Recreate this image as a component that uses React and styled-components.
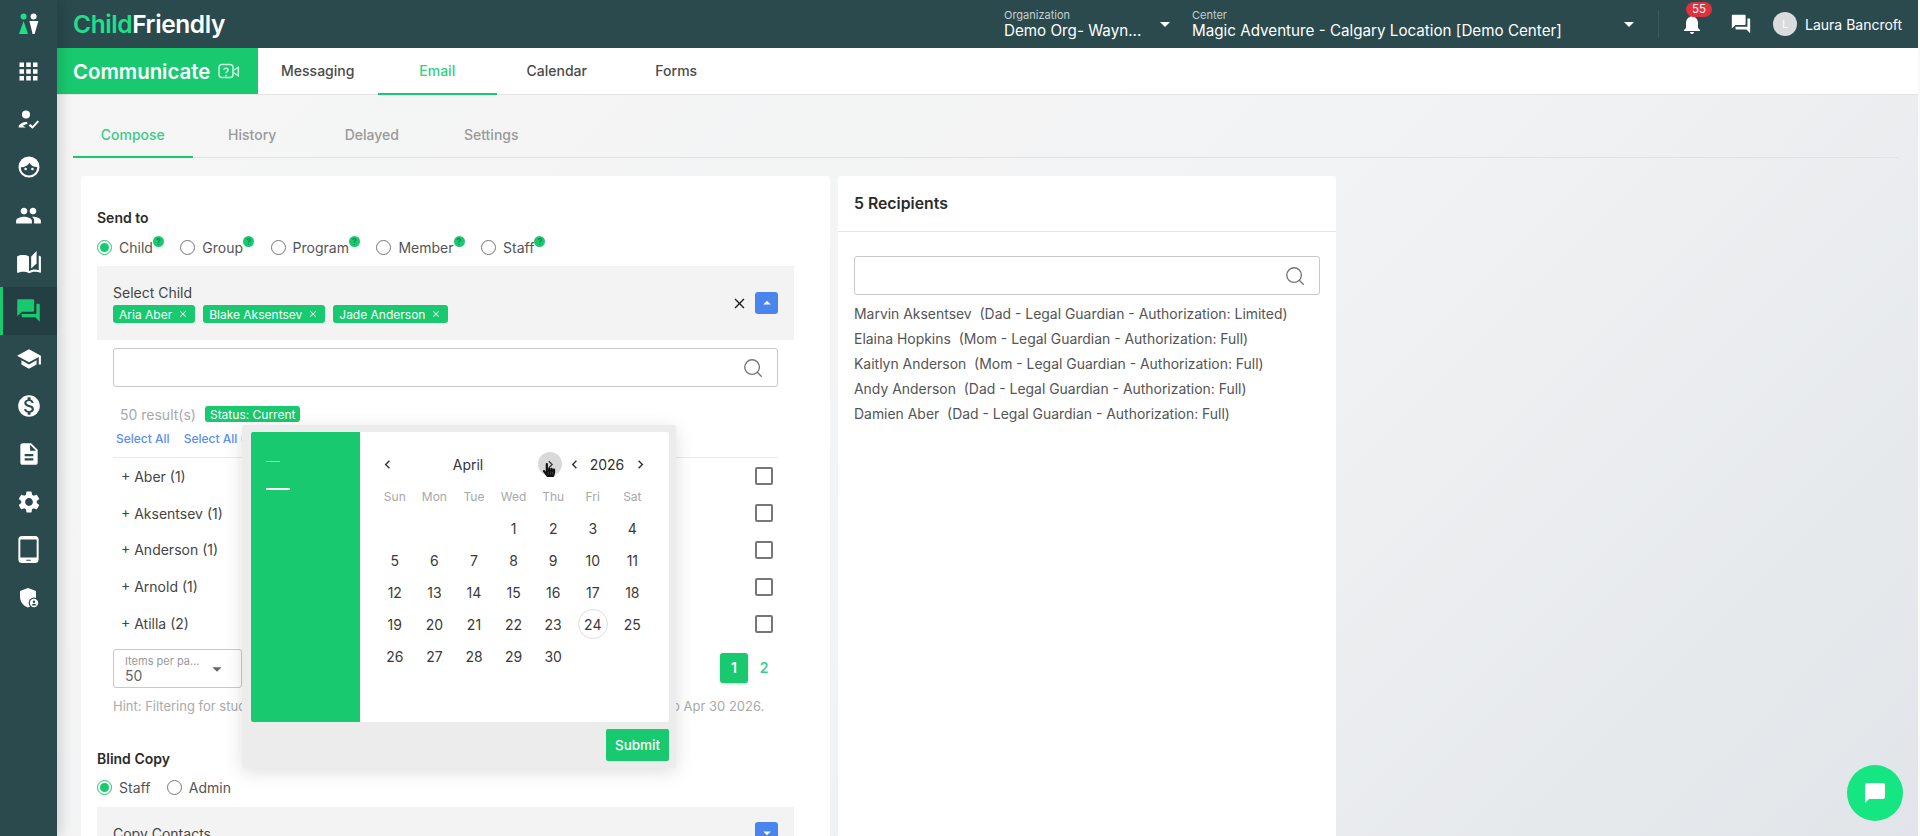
import styled, { createGlobalStyle } from 'styled-components';
import {
  MdApps,
  MdPeople,
  MdAutoStories,
  MdForum,
  MdSchool,
  MdMonetizationOn,
  MdDescription,
  MdSettings,
  MdTabletAndroid,
  MdNotifications,
  MdArrowDropDown,
  MdArrowDropUp,
  MdClose,
  MdChevronLeft,
  MdChevronRight,
  MdChatBubble,
} from 'react-icons/md';
import { FaHandPointer } from 'react-icons/fa';
import { Search } from 'lucide-react';

const GREEN = '#18c96f';
const BAR = '#2a4a4e';

const GlobalStyle = createGlobalStyle`
  html, body { margin: 0; padding: 0; }
  body {
    font-family: 'Inter', 'Liberation Sans', sans-serif;
    color: #333;
    background: #f4f4f4;
  }
  * { box-sizing: border-box; }
`;

const Shell = styled.div`
  position: relative;
  display: flex;
  width: 1920px;
  height: 836px;
  overflow: hidden;
  border-right: 2px solid #fafafa;
  background: linear-gradient(135deg, #f6f6f6 0%, #f2f3f4 55%, #e1e5e9 100%);
`;

const Sidebar = styled.nav`
  width: 57px;
  flex: none;
  display: flex;
  flex-direction: column;
  background: ${BAR};
  box-shadow: 4px 0 12px rgba(0, 0, 0, 0.14);
  z-index: 2;
`;

const LogoCell = styled.div`
  height: 48px;
  display: flex;
  align-items: center;
  justify-content: center;
`;

const NavItem = styled.div`
  height: 47.8px;
  display: flex;
  align-items: center;
  justify-content: center;
  color: ${(p) => (p.$active ? GREEN : '#fff')};
  background: ${(p) => (p.$active ? '#233f43' : 'transparent')};
  border-left: 3px solid ${(p) => (p.$active ? GREEN : 'transparent')};
  padding-right: 3px;
`;

const Main = styled.div`
  flex: 1;
  min-width: 0;
  display: flex;
  flex-direction: column;
`;

const TopBar = styled.header`
  height: 48px;
  flex: none;
  display: flex;
  align-items: center;
  padding-left: 16px;
  background: ${BAR};
  color: #fff;
`;

const Brand = styled.div`
  width: 931px;
  font-size: 24.5px;
  font-weight: 600;
  letter-spacing: -0.4px;
  color: #fff;
`;

const BrandAccent = styled.span`
  color: #1fe08a;
`;

const Picker = styled.div`
  width: ${(p) => p.$width}px;
  height: 100%;
  flex: none;
  display: flex;
  align-items: center;
  position: relative;
  padding-right: ${(p) => p.$pad}px;
`;

const PickerText = styled.div`
  flex: 1;
  min-width: 0;
  padding-top: 1px;
`;

const PickerLabel = styled.div`
  font-size: 11px;
  line-height: 12px;
  color: #c5d0d1;
`;

const PickerValue = styled.div`
  font-size: 15.2px;
  line-height: 19px;
  color: #fff;
  white-space: nowrap;
`;

const BarDivider = styled.div`
  width: 1px;
  height: 28px;
  background: #3b595d;
  margin-right: 20px;
`;

const BellWrap = styled.div`
  position: relative;
  width: 26px;
  height: 26px;
  margin-right: 25px;
  margin-top: 2px;
  display: flex;
  justify-content: center;
`;

const Badge = styled.span`
  position: absolute;
  top: -10px;
  left: 7px;
  min-width: 26px;
  height: 15px;
  padding: 0 3px;
  border-radius: 8px;
  background: #e0313d;
  color: #fff;
  font-size: 11.5px;
  line-height: 15px;
  text-align: center;
`;

const Avatar = styled.div`
  width: 24px;
  height: 24px;
  margin: 0 8px 0 21px;
  border-radius: 50%;
  background: #d9dcdc;
  color: #fff;
  font-size: 10px;
  line-height: 24px;
  text-align: center;
`;

const UserName = styled.span`
  font-size: 14px;
  white-space: nowrap;
`;

const ModuleBar = styled.div`
  height: 47px;
  flex: none;
  display: flex;
  background: #fff;
  border-bottom: 1px solid #e4e4e4;
`;

const ModuleTitle = styled.div`
  width: 201px;
  display: flex;
  align-items: center;
  gap: 8px;
  padding-left: 16px;
  background: ${GREEN};
  color: #fff;
  font-size: 20.4px;
  font-weight: 600;
`;

const ModuleTab = styled.div`
  width: 119.5px;
  display: flex;
  align-items: center;
  justify-content: center;
  font-size: 14px;
  font-weight: 500;
  color: ${(p) => (p.$active ? '#2fcf84' : '#4a4a4a')};
  border-bottom: 2px solid ${(p) => (p.$active ? GREEN : 'transparent')};
  margin-bottom: -1px;
`;

const SubTabs = styled.div`
  height: 63px;
  flex: none;
  display: flex;
  margin: 0 20px 0 16px;
  border-bottom: 1px solid #e2e2e2;
`;

const SubTab = styled.div`
  width: 119.5px;
  padding-top: 31px;
  text-align: center;
  font-size: 14px;
  font-weight: 500;
  color: ${(p) => (p.$active ? '#3dcb88' : '#9a9a9a')};
  border-bottom: 2px solid ${(p) => (p.$active ? GREEN : 'transparent')};
  margin-bottom: -1px;
`;

const Cards = styled.div`
  flex: 1;
  min-height: 0;
  display: flex;
  gap: 8px;
  padding: 18px 0 0 24px;
  overflow: hidden;
`;

const Card = styled.section`
  position: relative;
  width: ${(p) => p.$width}px;
  flex: none;
  background: #fff;
  border-radius: 3px 3px 0 0;
`;

const ComposeCard = styled(Card)`
  padding: 33px 36px 0 16px;
`;

const SectionTitle = styled.div`
  font-size: 14px;
  line-height: 18px;
  font-weight: 600;
  color: #2b2b2b;
`;

const RadioRow = styled.div`
  display: flex;
  height: 22px;
  margin-top: 9px;
  align-items: center;
  gap: 16.5px;
`;

const RadioLabel = styled.label`
  display: flex;
  align-items: center;
  gap: 7px;
  font-size: 14px;
  color: #555;
`;

const RadioMark = styled.span`
  position: relative;
  width: 15px;
  height: 15px;
  border-radius: 50%;
  border: 1px solid ${(p) => (p.$on ? GREEN : '#777')};

  &::after {
    content: '';
    display: ${(p) => (p.$on ? 'block' : 'none')};
    position: absolute;
    inset: 2px;
    border-radius: 50%;
    background: ${GREEN};
  }
`;

const HelpLabel = styled.span`
  position: relative;
  padding-right: ${(p) => (p.$help ? 11 : 0)}px;
`;

const HelpDot = styled.span`
  position: absolute;
  right: 0;
  top: -3px;
  width: 11px;
  height: 11px;
  border-radius: 50%;
  background: ${GREEN};
  color: #0f8a55;
  font-size: 9px;
  font-weight: 600;
  line-height: 11px;
  text-align: center;
`;

const SelectBox = styled.div`
  position: relative;
  display: flex;
  flex-direction: column;
  margin-top: 8px;
  height: ${(p) => (p.$tall ? 74 : 60)}px;
  padding: 18px 16px 0;
  background: #f3f3f3;
`;

const SelectLabel = styled.div`
  font-size: 14px;
  line-height: 18px;
  color: #444;
`;

const ChipRow = styled.div`
  display: flex;
  gap: 8px;
  margin-top: 3px;
`;

const Chip = styled.span`
  display: inline-flex;
  align-items: center;
  height: 18px;
  padding: 0 7px 0 6px;
  gap: 6px;
  border-radius: 3px;
  background: ${GREEN};
  color: #fff;
  font-size: 12px;
  white-space: nowrap;
`;

const SelectActions = styled.div`
  position: absolute;
  right: 16px;
  top: ${(p) => p.$top}px;
  display: flex;
  align-items: center;
  gap: 7px;
  color: #222;
`;

const ToggleButton = styled.span`
  width: 23px;
  height: 22px;
  display: flex;
  align-items: center;
  justify-content: center;
  border-radius: 3px;
  background: #4a85ee;
  color: #fff;
`;

const SearchField = styled.div`
  display: flex;
  align-items: center;
  justify-content: flex-end;
  height: 39px;
  margin: ${(p) => p.$margin};
  padding-right: 13px;
  border: 1px solid #c9c9c9;
  border-radius: 3px;
  background: #fff;
  color: #777;
`;

const ResultLine = styled.div`
  display: flex;
  align-items: center;
  gap: 9px;
  height: 18px;
  margin: 18px 0 0 23px;
  font-size: 14px;
  color: #a9a9a9;
`;

const StatusChip = styled(Chip)`
  height: 16px;
  padding: 0 5px;
`;

const SelectLinks = styled.div`
  display: flex;
  gap: 14px;
  height: 16px;
  margin: 8px 0 0 19px;
  font-size: 12px;
  line-height: 16px;
  font-weight: 500;
  color: #5c8df0;
`;

const FamilyList = styled.div`
  margin: 10px 16px 0;
  border-top: 1px solid #e9e9e9;
`;

const FamilyRow = styled.div`
  display: flex;
  align-items: center;
  justify-content: space-between;
  height: 36.8px;
  padding: 0 5px 0 8px;
  font-size: 14px;
  color: #444;
`;

const CheckBox = styled.span`
  width: 18px;
  height: 18px;
  border: 2px solid #777;
  border-radius: 2px;
`;

const PagerRow = styled.div`
  display: flex;
  align-items: center;
  margin: 7px 16px 0;
  height: 39px;
`;

const PerPage = styled.div`
  position: relative;
  width: 129px;
  height: 39px;
  padding: 5px 0 0 11px;
  border: 1px solid #c9c9c9;
  border-radius: 3px;
  color: #666;
`;

const PerPageLabel = styled.div`
  font-size: 11px;
  line-height: 12px;
  color: #999;
`;

const PerPageValue = styled.div`
  font-size: 14px;
  line-height: 17px;
`;

const CaretSlot = styled.span`
  position: absolute;
  right: 13px;
  top: 8px;
`;

const PageButton = styled.span`
  width: ${(p) => (p.$on ? 28 : 16)}px;
  height: 30px;
  margin-left: ${(p) => (p.$on ? 'auto' : '8px')};
  margin-right: ${(p) => (p.$on ? 0 : '6px')};
  border-radius: 3px;
  background: ${(p) => (p.$on ? GREEN : 'transparent')};
  box-shadow: ${(p) => (p.$on ? '0 1px 3px rgba(0,0,0,.2)' : 'none')};
  color: ${(p) => (p.$on ? '#fff' : '#35cf86')};
  font-size: 14px;
  font-weight: 600;
  line-height: 30px;
  text-align: center;
`;

const Hint = styled.div`
  margin: 9px 0 0 16px;
  font-size: 13px;
  line-height: 18px;
  color: #aaa;
  white-space: nowrap;
`;

const BlindTitle = styled(SectionTitle)`
  margin-top: 35px;
`;

const RecipientHead = styled.div`
  height: 56px;
  display: flex;
  align-items: center;
  padding-left: 16px;
  border-bottom: 1px solid #e6e6e6;
  font-size: 15.8px;
  font-weight: 600;
  color: #2b2b2b;
`;

const RecipientList = styled.div`
  padding: 0 16px;
`;

const Recipient = styled.div`
  height: 25px;
  line-height: 25px;
  font-size: 13.95px;
  color: #555;
  white-space: pre;
`;

const PopupShell = styled.div`
  position: absolute;
  left: 161px;
  top: 249px;
  width: 434px;
  height: 343px;
  padding: 7px 7px 0 9px;
  background: #ececec;
  box-shadow: 0 4px 18px rgba(0, 0, 0, 0.13);
  border-radius: 2px;
`;

const PopupBody = styled.div`
  display: flex;
  height: 290px;
  background: #fff;
  border-radius: 2px;
  overflow: hidden;
`;

const RangePane = styled.div`
  width: 109px;
  flex: none;
  padding: 29px 0 0 15px;
  background: ${GREEN};
`;

const RangeDash = styled.div`
  width: ${(p) => p.$w}px;
  height: ${(p) => p.$h}px;
  margin-bottom: ${(p) => p.$gap}px;
  background: ${(p) => p.$color};
`;

const CalendarPane = styled.div`
  flex: 1;
  padding: 20px 0 0 15px;
`;

const MonthHead = styled.div`
  display: flex;
  align-items: center;
  height: 24px;
  padding-left: 1px;
  color: #333;
  font-size: 14px;
`;

const NavChevron = styled.span`
  display: flex;
  align-items: center;
  justify-content: center;
  width: ${(p) => p.$w || 24}px;
  height: 24px;
  border-radius: 50%;
  background: ${(p) => (p.$hover ? '#d9d9d9' : 'transparent')};
`;

const MonthName = styled.span`
  width: ${(p) => p.$w}px;
  text-align: center;
`;

const WeekGrid = styled.div`
  display: grid;
  grid-template-columns: repeat(7, 39.6px);
  grid-auto-rows: 32px;
  width: 277px;
  margin-top: ${(p) => p.$top}px;
`;

const WeekDay = styled.span`
  display: flex;
  align-items: center;
  justify-content: center;
  font-size: 12px;
  color: #a8a8a8;
`;

const DayCell = styled.span`
  display: flex;
  align-items: center;
  justify-content: center;
  font-size: 14px;
  color: #3a3a3a;
`;

const TodayRing = styled.span`
  width: 30px;
  height: 30px;
  display: flex;
  align-items: center;
  justify-content: center;
  border: 1px solid #dedede;
  border-radius: 50%;
`;

const PopupFoot = styled.div`
  display: flex;
  justify-content: flex-end;
  margin-top: 7px;
`;

const SubmitButton = styled.button`
  width: 63px;
  height: 32px;
  border: none;
  border-radius: 2px;
  background: ${GREEN};
  color: #fff;
  font-family: inherit;
  font-size: 13.5px;
  font-weight: 500;
`;

const Pointer = styled.span`
  position: absolute;
  left: 300px;
  top: 38px;
  color: #111;
  display: flex;
`;

const ChatFab = styled.div`
  position: absolute;
  left: 1847px;
  top: 765px;
  width: 56px;
  height: 56px;
  display: flex;
  align-items: center;
  justify-content: center;
  border-radius: 50%;
  background: #16e681;
  color: #fff;
`;

const LogoMark = () => (
  <svg width="20" height="22" viewBox="0 0 20 22">
    <circle cx="4.6" cy="3.6" r="3" fill="#1fe08a" />
    <circle cx="14.6" cy="3.6" r="3" fill="#fff" />
    <path d="M4.6 8 L9 21 H0 Z" fill="#1fe08a" />
    <path d="M10.4 8 H19.4 L15.6 21 H13.6 Z" fill="#fff" />
  </svg>
);

const PersonCheck = () => (
  <svg width="24" height="24" viewBox="0 0 24 24" fill="#fff">
    <circle cx="9" cy="6.5" r="4" />
    <path d="M1.5 19.5c0-3.4 4.4-5.4 8.3-5.4l1 1.4-5 2.2 3 1.8z" />
    <path d="M11.5 17.5l2-1.6 2 2 5-5.4 1.6 1.3-6.6 7z" />
  </svg>
);

const FaceIcon = () => (
  <svg width="24" height="24" viewBox="0 0 24 24">
    <circle cx="12" cy="12" r="10.5" fill="#fff" />
    <path d="M3.8 12.2c3.6.2 6.8-1.200 8.600-4.400 1.600 2.800 4.400 4.400 7.800 4.300.1 4.800-3.500 8.300-8.200 8.300s-8.300-3.500-8.200-8.200z" fill={BAR} />
    <circle cx="8.600" cy="14" r="1.300" fill="#fff" />
    <circle cx="15.400" cy="14" r="1.300" fill="#fff" />
  </svg>
);

const ShieldUser = () => (
  <svg width="22" height="22" viewBox="0 0 22 22">
    <path d="M10 1l8 3v5.500c0 5.200-3.400 9.600-8 11-4.600-1.400-8-5.800-8-11V4z" fill="#fff" />
    <circle cx="16" cy="16" r="5.400" fill={BAR} />
    <circle cx="16" cy="16" r="4.200" fill="#fff" />
    <circle cx="16" cy="14.800" r="1.200" fill={BAR} />
    <path d="M13.600 18.500c.4-1.200 1.300-1.700 2.400-1.700s2 .5 2.400 1.700z" fill={BAR} />
  </svg>
);

const VideoHelp = () => (
  <svg width="22" height="17" viewBox="0 0 22 17" fill="none" stroke="#c8f2dc" strokeWidth="1.500">
    <rect x="1" y="1.500" width="14" height="13" rx="3" />
    <path d="M15.500 7.500l4.800-3.300v8.600l-4.800-3.300" />
    <path d="M5.800 6.800c.2-2 4.200-2 4.300.2 0 1.700-2.100 1.500-2.100 3.300" />
    <path d="M8 11.800v1.600" />
  </svg>
);

const sideItems = [
  [<MdApps size={27} key="a" />],
  [<PersonCheck key="b" />],
  [<FaceIcon key="c" />],
  [<MdPeople size={27} key="d" />],
  [<MdAutoStories size={26} key="e" />],
  [<MdForum size={27} key="f" />, true],
  [<MdSchool size={26} key="g" />],
  [<MdMonetizationOn size={26} key="h" />],
  [<MdDescription size={26} key="i" />],
  [<MdSettings size={26} key="j" />],
  [<MdTabletAndroid size={27} key="k" />],
  [<ShieldUser key="l" />],
];

const sendOptions = ['Child', 'Group', 'Program', 'Member', 'Staff'];
const families = ['Aber (1)', 'Aksentsev (1)', 'Anderson (1)', 'Arnold (1)', 'Atilla (2)'];
const recipients = [
  'Marvin Aksentsev  (Dad - Legal Guardian - Authorization: Limited)',
  'Elaina Hopkins  (Mom - Legal Guardian - Authorization: Full)',
  'Kaitlyn Anderson  (Mom - Legal Guardian - Authorization: Full)',
  'Andy Anderson  (Dad - Legal Guardian - Authorization: Full)',
  'Damien Aber  (Dad - Legal Guardian - Authorization: Full)',
];
const weekDays = ['Sun', 'Mon', 'Tue', 'Wed', 'Thu', 'Fri', 'Sat'];
const leadingBlanks = [0, 1, 2];
const days = Array.from({ length: 30 }, (_, i) => i + 1);

function Radio({ label, on, help }) {
  return (
    <RadioLabel>
      <RadioMark $on={on} />
      <HelpLabel $help={help}>
        {label}
        {help && <HelpDot>?</HelpDot>}
      </HelpLabel>
    </RadioLabel>
  );
}

function DatePopup() {
  return (
    <PopupShell>
      <PopupBody>
        <RangePane>
          <RangeDash $w={14} $h={1} $gap={26} $color="#8fe6ba" />
          <RangeDash $w={24} $h={2} $gap={0} $color="#fff" />
        </RangePane>
        <CalendarPane>
          <MonthHead>
            <NavChevron $w={22}><MdChevronLeft size={17} /></NavChevron>
            <MonthName $w={140}>April</MonthName>
            <NavChevron $hover $w={24}><MdChevronRight size={15} /></NavChevron>
            <NavChevron $w={24}><MdChevronLeft size={17} /></NavChevron>
            <MonthName $w={42}>2026</MonthName>
            <NavChevron $w={24}><MdChevronRight size={17} /></NavChevron>
          </MonthHead>
          <WeekGrid $top={4}>
            {weekDays.map((d) => <WeekDay key={d}>{d}</WeekDay>)}
            {leadingBlanks.map((b) => <DayCell key={b} />)}
            {days.map((d) => (
              <DayCell key={d}>{d === 24 ? <TodayRing>{d}</TodayRing> : d}</DayCell>
            ))}
          </WeekGrid>
        </CalendarPane>
      </PopupBody>
      <PopupFoot>
        <SubmitButton>Submit</SubmitButton>
      </PopupFoot>
      <Pointer><FaHandPointer size={14} /></Pointer>
    </PopupShell>
  );
}

export default function App() {
  return (
    <Shell>
      <GlobalStyle />
      <Sidebar>
        <LogoCell><LogoMark /></LogoCell>
        {sideItems.map(([icon, active], i) => (
          <NavItem key={i} $active={active}>{icon}</NavItem>
        ))}
      </Sidebar>
      <Main>
        <TopBar>
          <Brand><BrandAccent>Child</BrandAccent>Friendly</Brand>
          <Picker $width={188} $pad={15}>
            <PickerText>
              <PickerLabel>Organization</PickerLabel>
              <PickerValue>Demo Org- Wayn...</PickerValue>
            </PickerText>
            <MdArrowDropDown size={24} />
          </Picker>
          <Picker $width={466} $pad={17}>
            <PickerText>
              <PickerLabel>Center</PickerLabel>
              <PickerValue>Magic Adventure - Calgary Location [Demo Center]</PickerValue>
            </PickerText>
            <MdArrowDropDown size={24} />
          </Picker>
          <BarDivider />
          <BellWrap>
            <MdNotifications size={24} />
            <Badge>55</Badge>
          </BellWrap>
          <MdForum size={22} />
          <Avatar>L</Avatar>
          <UserName>Laura Bancroft</UserName>
        </TopBar>
        <ModuleBar>
          <ModuleTitle>Communicate <VideoHelp /></ModuleTitle>
          <ModuleTab>Messaging</ModuleTab>
          <ModuleTab $active>Email</ModuleTab>
          <ModuleTab>Calendar</ModuleTab>
          <ModuleTab>Forms</ModuleTab>
        </ModuleBar>
        <SubTabs>
          <SubTab $active>Compose</SubTab>
          <SubTab>History</SubTab>
          <SubTab>Delayed</SubTab>
          <SubTab>Settings</SubTab>
        </SubTabs>
        <Cards>
          <ComposeCard $width={749}>
            <SectionTitle>Send to</SectionTitle>
            <RadioRow>
              {sendOptions.map((o, i) => <Radio key={o} label={o} on={i === 0} help />)}
            </RadioRow>
            <SelectBox $tall>
              <SelectLabel>Select Child</SelectLabel>
              <ChipRow>
                <Chip>Aria Aber <MdClose size={10} /></Chip>
                <Chip>Blake Aksentsev <MdClose size={10} /></Chip>
                <Chip>Jade Anderson <MdClose size={10} /></Chip>
              </ChipRow>
              <SelectActions $top={26}>
                <MdClose size={17} />
                <ToggleButton><MdArrowDropUp size={18} /></ToggleButton>
              </SelectActions>
            </SelectBox>
            <SearchField $margin="8px 16px 0">
              <Search size={22} strokeWidth={1.5} />
            </SearchField>
            <ResultLine>
              50 result(s)
              <StatusChip>Status: Current</StatusChip>
            </ResultLine>
            <SelectLinks>
              <span>Select All</span>
              <span>Select All (50)</span>
            </SelectLinks>
            <FamilyList>
              {families.map((f) => (
                <FamilyRow key={f}>
                  + {f}
                  <CheckBox />
                </FamilyRow>
              ))}
            </FamilyList>
            <PagerRow>
              <PerPage>
                <PerPageLabel>Items per pa...</PerPageLabel>
                <PerPageValue>50</PerPageValue>
                <CaretSlot><MdArrowDropDown size={22} /></CaretSlot>
              </PerPage>
              <PageButton $on>1</PageButton>
              <PageButton>2</PageButton>
            </PagerRow>
            <Hint>Hint: Filtering for students active between the selected date range below, from Apr 1 2026 to Apr 30 2026.</Hint>
            <BlindTitle>Blind Copy</BlindTitle>
            <RadioRow>
              <Radio label="Staff" on />
              <Radio label="Admin" />
            </RadioRow>
            <SelectBox>
              <SelectLabel>Copy Contacts</SelectLabel>
              <SelectActions $top={15}>
                <ToggleButton><MdArrowDropDown size={18} /></ToggleButton>
              </SelectActions>
            </SelectBox>
            <DatePopup />
          </ComposeCard>
          <Card $width={498}>
            <RecipientHead>5 Recipients</RecipientHead>
            <SearchField $margin="24px 16px 6px">
              <Search size={22} strokeWidth={1.5} />
            </SearchField>
            <RecipientList>
              {recipients.map((r) => <Recipient key={r}>{r}</Recipient>)}
            </RecipientList>
          </Card>
        </Cards>
      </Main>
      <ChatFab><MdChatBubble size={24} /></ChatFab>
    </Shell>
  );
}
